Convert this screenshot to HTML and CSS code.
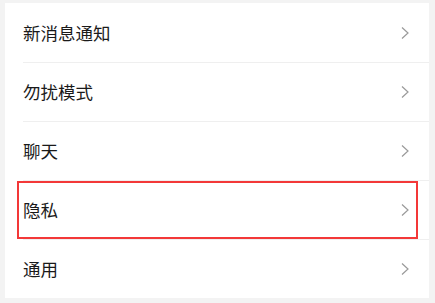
FILE: index.html
```html
<!DOCTYPE html>
<html lang="zh-CN">
  <head>
    <meta charset="UTF-8" />
    <meta name="viewport" content="width=device-width, initial-scale=1.0" />
    <title>设置</title>
    <link rel="stylesheet" href="styles.css">
  </head>
  <body>
    <div class="settings">
      <div class="row">
        <span class="label">新消息通知</span>
        <svg class="arrow" viewBox="0 0 8 12"><path d="M1 0.5 L7 6 L1 11.5" /></svg>
      </div>
      <div class="row">
        <span class="label">勿扰模式</span>
        <svg class="arrow" viewBox="0 0 8 12"><path d="M1 0.5 L7 6 L1 11.5" /></svg>
      </div>
      <div class="row">
        <span class="label">聊天</span>
        <svg class="arrow" viewBox="0 0 8 12"><path d="M1 0.5 L7 6 L1 11.5" /></svg>
      </div>
      <div class="row highlighted">
        <span class="label">隐私</span>
        <svg class="arrow" viewBox="0 0 8 12"><path d="M1 0.5 L7 6 L1 11.5" /></svg>
      </div>
      <div class="row">
        <span class="label">通用</span>
        <svg class="arrow" viewBox="0 0 8 12"><path d="M1 0.5 L7 6 L1 11.5" /></svg>
      </div>
    </div>
  </body>
</html>
```

FILE: styles.css
```css
:root {
  --bg-color: #f3f3f3;
  --text-color: #1a1a1a;
  --line-color: #efefef;
  --arrow-color: #9a9a9a;
  --mark-color: #f33838;
}

body {
  margin: 0;
  background-color: var(--bg-color);
  font-family: 'Noto Sans CJK SC', 'Noto Sans', sans-serif;
  color: var(--text-color);
}

.settings {
  width: 424px;
  margin: 3px 0 0 5px;
  background-color: white;
}

.row {
  position: relative;
  height: 59px;
  display: flex;
  align-items: center;
  justify-content: space-between;
  padding: 0 20px 0 18px;
}

.row + .row::before {
  content: '';
  position: absolute;
  top: 0;
  left: 18px;
  right: 0;
  border-top: 1px solid var(--line-color);
}

.label {
  font-size: 17.5px;
  line-height: 1;
}

.arrow {
  width: 8px;
  height: 12px;
  fill: none;
  stroke: var(--arrow-color);
  stroke-width: 1.2;
}

.highlighted::after {
  content: '';
  position: absolute;
  top: 1px;
  bottom: 0;
  left: 12px;
  right: 11px;
  border: 2px solid var(--mark-color);
}
```
